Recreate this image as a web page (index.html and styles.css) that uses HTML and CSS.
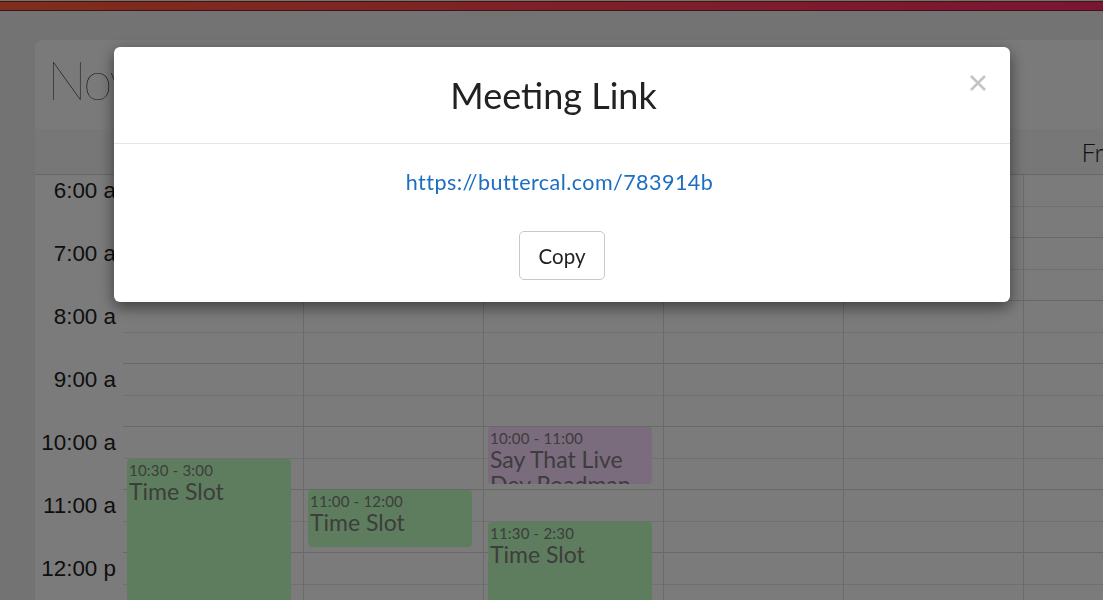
FILE: index.html
```html
<!DOCTYPE html>
<html lang="en">
<head>
<meta charset="utf-8">
<title>Meeting Link</title>
<link rel="stylesheet" href="styles.css">
</head>
<body>
<div class="topbar"></div>
<div class="card">
  <div class="card-title">November 2020</div>
  <div class="day-header">
    <div class="corner"></div>
    <div class="day">Sun 8</div>
    <div class="day">Mon 9</div>
    <div class="day">Tue 10</div>
    <div class="day">Wed 11</div>
    <div class="day">Thu 12</div>
    <div class="day">Fri 13</div>
    <div class="day">Sat 14</div>
  </div>
  <div class="grid">
    <div class="times">
      <div class="tslot">6:00 a</div><div class="tslot"></div>
      <div class="tslot">7:00 a</div><div class="tslot"></div>
      <div class="tslot">8:00 a</div><div class="tslot"></div>
      <div class="tslot">9:00 a</div><div class="tslot"></div>
      <div class="tslot">10:00 a</div><div class="tslot"></div>
      <div class="tslot">11:00 a</div><div class="tslot"></div>
      <div class="tslot">12:00 p</div><div class="tslot"></div>
    </div>
    <div class="col">
      <div class="slot"></div><div class="slot"></div><div class="slot"></div><div class="slot"></div><div class="slot"></div><div class="slot"></div><div class="slot"></div><div class="slot"></div><div class="slot"></div><div class="slot"></div><div class="slot"></div><div class="slot"></div><div class="slot"></div><div class="slot"></div>
      <div class="event green" style="top:283.5px;height:300px"><div class="ev-time">10:30 - 3:00</div><div class="ev-title">Time Slot</div></div>
    </div>
    <div class="col">
      <div class="slot"></div><div class="slot"></div><div class="slot"></div><div class="slot"></div><div class="slot"></div><div class="slot"></div><div class="slot"></div><div class="slot"></div><div class="slot"></div><div class="slot"></div><div class="slot"></div><div class="slot"></div><div class="slot"></div><div class="slot"></div>
      <div class="event green" style="top:315px;height:57px"><div class="ev-time">11:00 - 12:00</div><div class="ev-title">Time Slot</div></div>
    </div>
    <div class="col">
      <div class="slot"></div><div class="slot"></div><div class="slot"></div><div class="slot"></div><div class="slot"></div><div class="slot"></div><div class="slot"></div><div class="slot"></div><div class="slot"></div><div class="slot"></div><div class="slot"></div><div class="slot"></div><div class="slot"></div><div class="slot"></div>
      <div class="event purple" style="top:252px;height:57px"><div class="ev-time">10:00 - 11:00</div><div class="ev-title">Say That Live Dev Roadmap</div></div>
      <div class="event green" style="top:346.5px;height:300px"><div class="ev-time">11:30 - 2:30</div><div class="ev-title">Time Slot</div></div>
    </div>
    <div class="col">
      <div class="slot"></div><div class="slot"></div><div class="slot"></div><div class="slot"></div><div class="slot"></div><div class="slot"></div><div class="slot"></div><div class="slot"></div><div class="slot"></div><div class="slot"></div><div class="slot"></div><div class="slot"></div><div class="slot"></div><div class="slot"></div>
    </div>
    <div class="col">
      <div class="slot"></div><div class="slot"></div><div class="slot"></div><div class="slot"></div><div class="slot"></div><div class="slot"></div><div class="slot"></div><div class="slot"></div><div class="slot"></div><div class="slot"></div><div class="slot"></div><div class="slot"></div><div class="slot"></div><div class="slot"></div>
    </div>
    <div class="col">
      <div class="slot"></div><div class="slot"></div><div class="slot"></div><div class="slot"></div><div class="slot"></div><div class="slot"></div><div class="slot"></div><div class="slot"></div><div class="slot"></div><div class="slot"></div><div class="slot"></div><div class="slot"></div><div class="slot"></div><div class="slot"></div>
    </div>
    <div class="col">
      <div class="slot"></div><div class="slot"></div><div class="slot"></div><div class="slot"></div><div class="slot"></div><div class="slot"></div><div class="slot"></div><div class="slot"></div><div class="slot"></div><div class="slot"></div><div class="slot"></div><div class="slot"></div><div class="slot"></div><div class="slot"></div>
    </div>
  </div>
</div>

<div class="backdrop"></div>
<div class="modal" role="dialog">
  <div class="modal-header">
    <h4 class="modal-title">Meeting Link</h4>
    <button class="close" aria-label="Close">
      <svg width="18" height="18" viewBox="0 0 18 18"><path d="M2 2 L16 16 M16 2 L2 16" stroke="#c4c4c4" stroke-width="2.6" stroke-linecap="butt" fill="none"/></svg>
    </button>
  </div>
  <div class="modal-body">
    <a class="link" href="#">https://buttercal.com/783914b</a>
    <button class="copy-btn">Copy</button>
  </div>
</div>
</body>
</html>
```

FILE: styles.css
```css
* { box-sizing: border-box; }
html, body { margin: 0; padding: 0; }
body {
  background: #e6e6e6;
  overflow: hidden;
  height: 600px;
  padding-top: 1px;
  font-family: "Lato", "Liberation Sans", sans-serif;
}
.topbar {
  height: 10px;
  background: linear-gradient(to right, #fe5c38, #f62a6a);
  border-top: 1px solid #8a2a20;
  border-bottom: 1px solid #8a2030;
}
.card {
  margin: 29px 0 0 35px;
  width: 1400px;
  background: #f4f4f4;
  border-radius: 7px 0 0 0;
}
.card-title {
  height: 89px;
  padding: 8px 0 0 12px;
  font-family: "Lato", "Liberation Sans", sans-serif;
  font-weight: 200;
  font-size: 53px;
  letter-spacing: -2.5px;
  color: #1a1a1a;
  white-space: nowrap;
}
.day-header {
  display: flex;
  height: 46px;
  background: #eeeeee;
  border-bottom: 1px solid #cccccc;
}
.corner { width: 88px; flex: none; }
.day {
  width: 180px;
  flex: none;
  display: flex;
  align-items: center;
  justify-content: center;
  font-family: "Lato", "Liberation Sans", sans-serif;
  font-weight: 300;
  font-size: 25px;
  color: #222;
}
.grid {
  display: flex;
  background: #f6f6f6;
}
.times { width: 88px; flex: none; }
.tslot {
  height: 31.5px;
  display: flex;
  align-items: center;
  justify-content: flex-end;
  padding-right: 7px;
  font-family: "Liberation Sans", Arial, sans-serif;
  font-size: 22.4px;
  color: #1c1c1c;
  white-space: nowrap;
}
.col {
  position: relative;
  width: 180px;
  flex: none;
  border-left: 1px solid #d4d4d4;
}
.times + .col { border-left: 0; }
.slot {
  height: 31.5px;
  border-bottom: 1px solid #dedede;
}
.slot:nth-child(even) { border-bottom-color: #d0d0d0; }
.event {
  position: absolute;
  left: 4px;
  width: 164px;
  border-radius: 4px;
  padding: 3px 2px;
  overflow: hidden;
  color: #7a7a7a;
}
.green { background: #bcfbbc; }
.purple { background: #f5d7fa; }
.ev-time {
  font-size: 15px;
  line-height: 17px;
  letter-spacing: 0.2px;
}
.ev-title {
  font-size: 23px;
  line-height: 25px;
}
.backdrop {
  position: fixed;
  inset: 0;
  background: rgba(0, 0, 0, 0.5);
}
.modal {
  position: fixed;
  top: 47px;
  left: 114px;
  width: 896px;
  background: #fff;
  border-radius: 6px;
  box-shadow: 0 5px 15px rgba(0, 0, 0, 0.5);
  font-family: "Lato", "Liberation Sans", sans-serif;
}
.modal-header {
  position: relative;
  height: 97px;
  border-bottom: 1px solid #e5e5e5;
  display: flex;
  align-items: center;
  justify-content: center;
}
.modal-title {
  margin: 0 17px 0 0;
  font-weight: 400;
  font-size: 36px;
  color: #222;
}
.close {
  position: absolute;
  top: 27px;
  right: 23px;
  background: none;
  border: 0;
  padding: 0;
  cursor: pointer;
  display: flex;
}
.modal-body {
  display: flex;
  flex-direction: column;
  align-items: center;
  padding: 24px 5px 22px 0;
}
.link {
  font-size: 21.5px;
  line-height: 28px;
  letter-spacing: 0.45px;
  color: #1b6ec2;
  text-decoration: none;
}
.copy-btn {
  margin-top: 35px;
  margin-left: 5px;
  width: 86px;
  height: 49px;
  background: #fff;
  border: 1px solid #c8c8c8;
  border-radius: 5px;
  font-family: "Lato", "Liberation Sans", sans-serif;
  font-size: 20.5px;
  color: #222;
}
```
